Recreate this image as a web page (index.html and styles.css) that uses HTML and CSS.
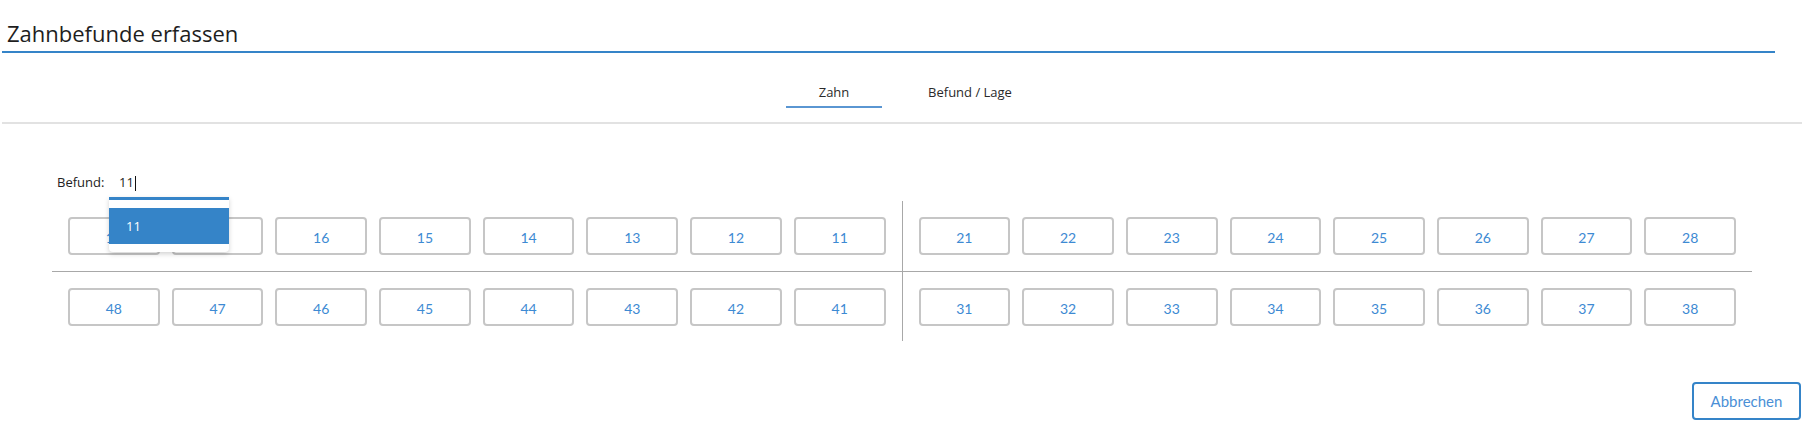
FILE: index.html
```html
<!DOCTYPE html>
<html lang="de">
<head>
<meta charset="utf-8">
<title>Zahnbefunde erfassen</title>
<link rel="stylesheet" href="styles.css">
</head>
<body>
<div class="page">
  <header class="title-bar">
    <h1 class="title">Zahnbefunde erfassen</h1>
  </header>

  <nav class="tabs">
    <div class="tab tab-active">Zahn</div>
    <div class="tab">Befund / Lage</div>
  </nav>

  <section class="content">
    <div class="befund-row">
      <label class="befund-label">Befund:</label>
      <div class="combo">
        <span class="combo-value">11</span><span class="caret"></span>
        <div class="popup">
          <div class="popup-item">11</div>
        </div>
      </div>
    </div>

    <div class="grid">
      <div class="quad q-tl">
        <button class="tooth">18</button>
        <button class="tooth">17</button>
        <button class="tooth">16</button>
        <button class="tooth">15</button>
        <button class="tooth">14</button>
        <button class="tooth">13</button>
        <button class="tooth">12</button>
        <button class="tooth">11</button>
      </div>
      <div class="vline"></div>
      <div class="quad q-tr">
        <button class="tooth">21</button>
        <button class="tooth">22</button>
        <button class="tooth">23</button>
        <button class="tooth">24</button>
        <button class="tooth">25</button>
        <button class="tooth">26</button>
        <button class="tooth">27</button>
        <button class="tooth">28</button>
      </div>
      <div class="hline"></div>
      <div class="quad q-bl">
        <button class="tooth">48</button>
        <button class="tooth">47</button>
        <button class="tooth">46</button>
        <button class="tooth">45</button>
        <button class="tooth">44</button>
        <button class="tooth">43</button>
        <button class="tooth">42</button>
        <button class="tooth">41</button>
      </div>
      <div class="quad q-br">
        <button class="tooth">31</button>
        <button class="tooth">32</button>
        <button class="tooth">33</button>
        <button class="tooth">34</button>
        <button class="tooth">35</button>
        <button class="tooth">36</button>
        <button class="tooth">37</button>
        <button class="tooth">38</button>
      </div>
    </div>
  </section>

  <footer class="footer">
    <button class="btn-cancel">Abbrechen</button>
  </footer>
</div>
</body>
</html>
```

FILE: styles.css
```css
* {
  box-sizing: border-box;
}

html, body {
  margin: 0;
  padding: 0;
  background: #ffffff;
}

body {
  font-family: "Open Sans", "Noto Sans", sans-serif;
  color: #222222;
}

.page {
  width: 1809px;
}

.title-bar {
  margin: 0 34px 0 2px;
  border-bottom: 2px solid #3584c8;
}

.title {
  margin: 0;
  padding: 18px 5px 3px 5px;
  font-size: 22px;
  line-height: 30px;
  font-weight: 400;
  color: #1e1e1e;
}

.tabs {
  margin: 0 7px 0 2px;
  padding: 30px 0 14px 0;
  border-bottom: 2px solid #e2e2e2;
  display: flex;
  justify-content: center;
  gap: 40px;
}

.tab {
  width: 96px;
  text-align: center;
  font-size: 13px;
  line-height: 18px;
  padding-bottom: 5px;
  border-bottom: 2px solid transparent;
  color: #2a2a2a;
}

.tab-active {
  border-bottom-color: #5a96d2;
}

.content {
  padding: 0 0 0 52px;
}

.befund-row {
  margin-top: 49px;
  display: flex;
  align-items: flex-start;
  position: relative;
  z-index: 2;
}

.befund-label {
  margin-left: 5px;
  width: 52px;
  font-size: 13px;
  line-height: 18px;
  color: #222222;
}

.combo {
  position: relative;
  width: 120px;
  height: 24px;
  padding-left: 10px;
  font-size: 13px;
  line-height: 18px;
  color: #222222;
  display: flex;
  align-items: flex-start;
}

.caret {
  display: inline-block;
  width: 1px;
  height: 15px;
  margin-top: 3px;
  margin-left: 1px;
  background: #111111;
}

.popup {
  position: absolute;
  left: 0;
  top: 24px;
  width: 120px;
  border-top: 3px solid #3584c8;
  padding: 8px 0 8px 0;
  background: #ffffff;
  border-radius: 0 0 4px 4px;
  box-shadow: 0 2px 5px rgba(0, 0, 0, 0.18);
}

.popup-item {
  height: 36px;
  line-height: 36px;
  padding-left: 17px;
  background: #3584c8;
  color: #ffffff;
  font-size: 13px;
}

.grid {
  margin-top: 4px;
  width: 1700px;
  display: grid;
  grid-template-columns: 1fr 1px 1fr;
  grid-template-rows: 70px 1px 69px;
}

.quad {
  display: flex;
  gap: 12px;
  padding: 16px 16px 0 16px;
}

.q-tl { grid-column: 1; grid-row: 1; }
.q-tr { grid-column: 3; grid-row: 1; }
.q-bl { grid-column: 1; grid-row: 3; }
.q-br { grid-column: 3; grid-row: 3; }

.vline {
  grid-column: 2;
  grid-row: 1 / 4;
  background: #a8a8a8;
}

.hline {
  grid-column: 1 / 4;
  grid-row: 2;
  background: #a8a8a8;
}

.tooth {
  flex: 1 1 0;
  height: 38px;
  border: 2px solid #c6c6c6;
  border-radius: 4px;
  background: #ffffff;
  color: #3d8ad3;
  font-family: "Lato", "Open Sans", sans-serif;
  font-size: 14px;
  padding: 2px 0 0 0;
}

.footer {
  margin-top: 41px;
  display: flex;
  justify-content: flex-end;
  padding-right: 8px;
}

.btn-cancel {
  height: 38px;
  width: 109px;
  border: 2px solid #3584c8;
  border-radius: 4px;
  background: #ffffff;
  color: #4a8fd6;
  font-family: "Lato", "Open Sans", sans-serif;
  font-size: 15px;
  padding: 0;
}
```
